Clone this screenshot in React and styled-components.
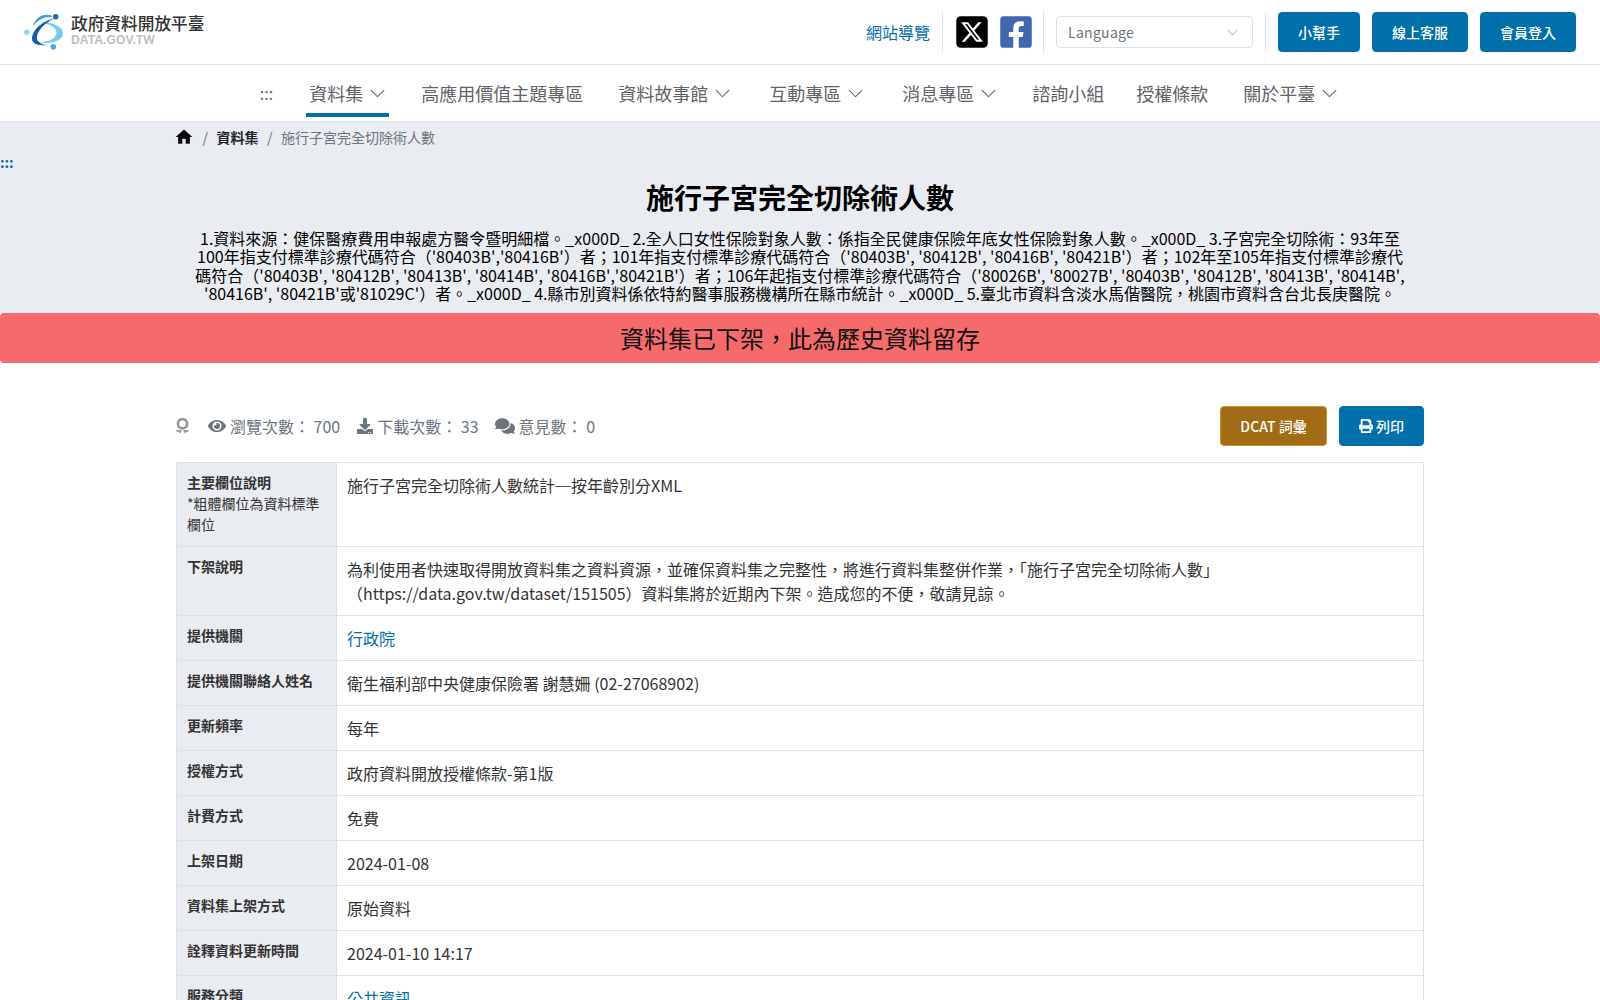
import styled, { createGlobalStyle } from "styled-components";
import { FaEye, FaDownload, FaComments, FaPrint, FaFacebookSquare } from "react-icons/fa";
import { FaSquareXTwitter } from "react-icons/fa6";
import { BsChevronDown } from "react-icons/bs";
import { MdHome } from "react-icons/md";

const GlobalStyle = createGlobalStyle`
  * { box-sizing: border-box; }
  body {
    margin: 0;
    background: #fff;
    color: #212529;
    font-family: "Noto Sans CJK TC", "Noto Sans", sans-serif;
    font-size: 16px;
  }
`;

const TopBar = styled.header`
  height: 65px;
  display: flex;
  align-items: center;
  justify-content: space-between;
  padding: 0 24px;
  border-bottom: 1px solid #dde1ea;
`;

const Brand = styled.a`
  display: flex;
  align-items: center;
  gap: 7px;
`;

const BrandText = styled.div`
  display: flex;
  flex-direction: column;
  margin-bottom: 5px;
`;

const BrandName = styled.span`
  font-size: 16.7px;
  line-height: 20px;
  font-weight: 500;
  color: #333;
`;

const BrandUrl = styled.span`
  margin-top: 1px;
  font-family: "Liberation Sans", sans-serif;
  font-size: 12.2px;
  line-height: 13px;
  font-weight: 700;
  color: #bfbfbf;
`;

const TopActions = styled.div`
  display: flex;
  align-items: center;
  height: 40px;
`;

const SiteMap = styled.a`
  color: #0070ab;
  font-size: 16px;
  padding-right: 12px;
  border-right: 1px solid #dde1ea;
  line-height: 40px;
`;

const Socials = styled.div`
  display: flex;
  align-items: center;
  gap: 8px;
  padding: 0 9.5px 0 10.5px;
  height: 40px;
  border-right: 1px solid #dde1ea;
  font-size: 36px;
  line-height: 0;
`;

const LangSelect = styled.div`
  width: 197px;
  height: 32px;
  margin: 0 12px;
  padding: 0 13px 0 11px;
  display: flex;
  align-items: center;
  justify-content: space-between;
  border: 1px solid #dde1ea;
  border-radius: 4px;
  color: #6c757d;
  font-size: 14px;
  letter-spacing: 0.3px;
`;

const TopButtons = styled.div`
  display: flex;
  gap: 12px;
  padding-left: 12px;
  border-left: 1px solid #dde1ea;
  height: 40px;
`;

const Button = styled.a`
  display: flex;
  align-items: center;
  justify-content: center;
  gap: 3px;
  height: 40px;
  width: ${(p) => p.$width}px;
  background: ${(p) => (p.$gold ? "#a26b16" : "#0070ab")};
  border: 1px solid ${(p) => (p.$gold ? "#d39128" : "#0070ab")};
  border-radius: 4px;
  color: #fff;
  font-size: 14px;
  font-weight: 500;
`;

const Nav = styled.nav`
  height: 57px;
  display: flex;
  justify-content: center;
  align-items: flex-start;
  padding: 8px 0 0 1px;
  border-bottom: 1px solid #dde1ea;
`;

const Dots = styled.span`
  color: #5f6368;
  font-size: 16px;
  line-height: 40px;
`;

const NavItem = styled.a`
  display: flex;
  align-items: center;
  gap: 6px;
  height: 44px;
  margin-left: ${(p) => p.$gap}px;
  padding: 0 3px;
  color: #5f6368;
  font-size: 18px;
  border-bottom: 4px solid ${(p) => (p.$active ? "#0070ab" : "transparent")};
`;

const Hero = styled.section`
  background: #e9ecf0;
  height: 191px;
`;

const Crumbs = styled.ol`
  width: 1248px;
  margin: 0 auto;
  padding: 2px 0 0;
  list-style: none;
  display: flex;
  align-items: center;
  height: 28px;
  font-size: 14px;
`;

const Crumb = styled.li`
  display: flex;
  align-items: center;
  color: ${(p) => (p.$current ? "#6c757d" : "#212529")};
  font-weight: ${(p) => (p.$bold ? 700 : 400)};
  line-height: 20px;
  &:not(:first-child)::before {
    content: "/";
    color: #6c757d;
    font-weight: 400;
    padding: 0 8.5px;
  }
`;

const HomeIcon = styled(MdHome)`
  margin-left: -2px;
  color: #000;
`;

const SkipDots = styled.div`
  height: 26px;
  color: #0070ab;
  font-size: 14px;
  font-weight: 700;
  line-height: 24px;
`;

const Title = styled.h1`
  margin: 0;
  text-align: center;
  font-size: 28px;
  font-weight: 700;
  line-height: 42px;
  color: #000;
`;

const Lead = styled.p`
  width: 1216px;
  margin: 11px auto 0;
  text-align: center;
  color: #000;
  font-size: 16px;
  line-height: 18.4px;
  font-kerning: none;
`;

const Banner = styled.div`
  height: 50px;
  background: #f56b6c;
  border-radius: 4px;
  text-align: center;
  color: #111;
  font-size: 24px;
  line-height: 50px;
`;

const Content = styled.main`
  width: 1248px;
  margin: 0 auto;
`;

const StatRow = styled.div`
  display: flex;
  align-items: center;
  justify-content: space-between;
  margin-top: 43px;
  height: 40px;
`;

const Stats = styled.div`
  display: flex;
  align-items: center;
  color: #6c757d;
  font-size: 16px;
`;

const Stat = styled.span`
  display: flex;
  align-items: center;
  gap: 4px;
  margin-left: ${(p) => p.$gap}px;
`;

const StatButtons = styled.div`
  display: flex;
  gap: 12px;
`;

const InfoTable = styled.table`
  width: 100%;
  margin-top: 16px;
  border-collapse: collapse;
  table-layout: fixed;
`;

const Head = styled.th`
  width: 160px;
  padding: 9px 10px 11px;
  border: 1px solid #dee2e6;
  background: #e9ecf0;
  color: #333;
  font-size: 14px;
  font-weight: 700;
  line-height: 21px;
  text-align: left;
  vertical-align: top;
`;

const Note = styled.span`
  display: block;
  font-weight: 400;
`;

const Cell = styled.td`
  padding: 10px;
  border: 1px solid #dee2e6;
  color: #333;
  font-size: 16px;
  line-height: 24px;
  vertical-align: top;
`;

const TextLink = styled.a`
  color: #0070ab;
`;

function Logo() {
  return (
    <svg width="40" height="42" viewBox="0 0 40 42">
      <path d="M17 11C30 11 40 17 39 23C38 30 27 34 13 31C25 32 32 27 32.500 22C33 17 27 14 17 11z" fill="#6fcdec" />
      <path d="M9 15C11 8 17 3 25 4C29 4.500 29 6 26 6C20 6 14 9 9 15z" fill="#3f9fdc" />
      <path d="M31 7C22 9 10 16 8 26C7 32 13 35 22 34C16 33 12 30 13 25C15 17 23 11 31 7z" fill="#1c5aa8" />
      <circle cx="31.700" cy="5.700" r="2.800" fill="#2a66b8" />
      <circle cx="2.800" cy="21.300" r="2.800" fill="#8fd8f2" />
      <circle cx="29.300" cy="35.700" r="2.800" fill="#4aa8df" />
    </svg>
  );
}

function RibbonIcon() {
  return (
    <svg width="13" height="16" viewBox="0 0 13 16">
      <circle cx="6.500" cy="5.800" r="4.600" fill="none" stroke="#969a9e" strokeWidth="2.800" />
      <path d="M0.500 12h5v1.500l-1.800 2-1.200-1.700h-2z" fill="#969a9e" />
      <path d="M12.500 12h-5v1.500l1.800 2 1.200-1.700h2z" fill="#969a9e" />
    </svg>
  );
}

const rows = [
  ["提供機關", <TextLink>行政院</TextLink>],
  ["提供機關聯絡人姓名", "衛生福利部中央健康保險署 謝慧姍 (02-27068902)"],
  ["更新頻率", "每年"],
  ["授權方式", "政府資料開放授權條款-第1版"],
  ["計費方式", "免費"],
  ["上架日期", "2024-01-08"],
  ["資料集上架方式", "原始資料"],
  ["詮釋資料更新時間", "2024-01-10 14:17"],
  ["服務分類", <TextLink>公共資訊</TextLink>],
];

const navChevron = <BsChevronDown size={17} />;

export default function App() {
  return (
    <>
      <GlobalStyle />
      <TopBar>
        <Brand>
          <Logo />
          <BrandText>
            <BrandName>政府資料開放平臺</BrandName>
            <BrandUrl>DATA.GOV.TW</BrandUrl>
          </BrandText>
        </Brand>
        <TopActions>
          <SiteMap>網站導覽</SiteMap>
          <Socials>
            <FaSquareXTwitter color="#000" />
            <FaFacebookSquare color="#4267b2" />
          </Socials>
          <LangSelect>
            Language
            <BsChevronDown size={13} color="#adb5bd" />
          </LangSelect>
          <TopButtons>
            <Button $width={82}>小幫手</Button>
            <Button $width={96}>線上客服</Button>
            <Button $width={96}>會員登入</Button>
          </TopButtons>
        </TopActions>
      </TopBar>
      <Nav>
        <Dots>:::</Dots>
        <NavItem $gap={33} $active>資料集{navChevron}</NavItem>
        <NavItem $gap={29}>高應用價值主題專區</NavItem>
        <NavItem $gap={29}>資料故事館{navChevron}</NavItem>
        <NavItem $gap={32}>互動專區{navChevron}</NavItem>
        <NavItem $gap={32}>消息專區{navChevron}</NavItem>
        <NavItem $gap={29}>諮詢小組</NavItem>
        <NavItem $gap={26}>授權條款</NavItem>
        <NavItem $gap={29}>關於平臺{navChevron}</NavItem>
      </Nav>
      <Hero>
        <Crumbs>
          <Crumb><HomeIcon size={20} /></Crumb>
          <Crumb $bold>資料集</Crumb>
          <Crumb $current>施行子宮完全切除術人數</Crumb>
        </Crumbs>
        <SkipDots>:::</SkipDots>
        <Title>施行子宮完全切除術人數</Title>
        <Lead>
          1.資料來源：健保醫療費用申報處方醫令暨明細檔。_x000D_ 2.全人口女性保險對象人數：係指全民健康保險年底女性保險對象人數。_x000D_ 3.子宮完全切除術：93年至100年指支付標準診療代碼符合（'80403B','80416B'）者；101年指支付標準診療代碼符合（'80403B', '80412B', '80416B', '80421B'）者；102年至105年指支付標準診療代碼符合（'80403B', '80412B', '80413B', '80414B', '80416B','80421B'）者；106年起指支付標準診療代碼符合（'80026B', '80027B', '80403B', '80412B', '80413B', '80414B', '80416B', '80421B'或'81029C'）者。_x000D_ 4.縣市別資料係依特約醫事服務機構所在縣市統計。_x000D_ 5.臺北市資料含淡水馬偕醫院，桃園市資料含台北長庚醫院。
        </Lead>
      </Hero>
      <Banner>資料集已下架，此為歷史資料留存</Banner>
      <Content>
        <StatRow>
          <Stats>
            <RibbonIcon />
            <Stat $gap={19}><FaEye size={18} /> 瀏覽次數： 700</Stat>
            <Stat $gap={17}><FaDownload size={16} /> 下載次數： 33</Stat>
            <Stat $gap={16}><FaComments size={20} /> 意見數： 0</Stat>
          </Stats>
          <StatButtons>
            <Button $gold $width={107}>DCAT 詞彙</Button>
            <Button $width={85}><FaPrint size={14} /> 列印</Button>
          </StatButtons>
        </StatRow>
        <InfoTable>
          <tbody>
            <tr>
              <Head>主要欄位說明<Note>*粗體欄位為資料標準欄位</Note></Head>
              <Cell>施行子宮完全切除術人數統計─按年齡別分XML</Cell>
            </tr>
            <tr>
              <Head>下架說明</Head>
              <Cell>為利使用者快速取得開放資料集之資料資源，並確保資料集之完整性，將進行資料集整併作業，「施行子宮完全切除術人數」（https://data.gov.tw/dataset/151505）資料集將於近期內下架。造成您的不便，敬請見諒。</Cell>
            </tr>
            {rows.map(([label, value]) => (
              <tr key={label}>
                <Head>{label}</Head>
                <Cell>{value}</Cell>
              </tr>
            ))}
          </tbody>
        </InfoTable>
      </Content>
    </>
  );
}
